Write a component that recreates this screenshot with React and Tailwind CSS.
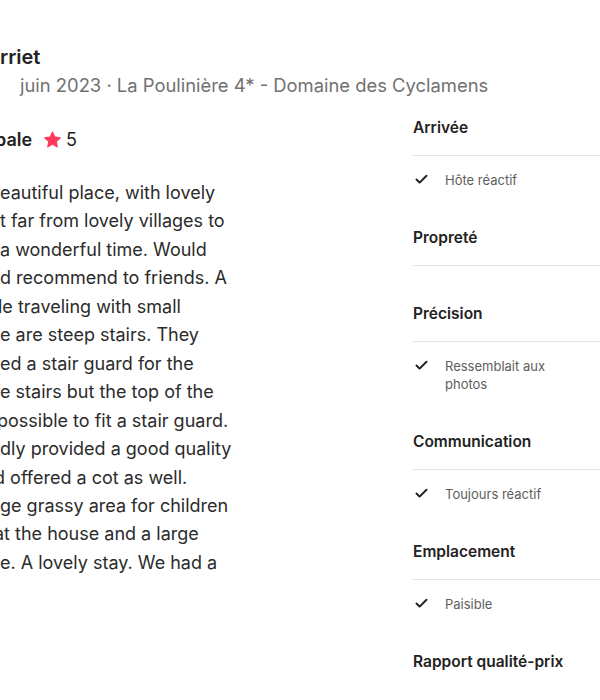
import { Check } from 'lucide-react';

const reviewLines = [
  { text: 'eautiful place, with lovely', shift: '' },
  { text: 't far from lovely villages to', shift: '' },
  { text: 'a wonderful time. Would', shift: '' },
  { text: 'd recommend to friends. A', shift: '' },
  { text: 'le traveling with small', shift: '-ml-[2px]' },
  { text: 'e are steep stairs. They', shift: '' },
  { text: 'ed a stair guard for the', shift: '' },
  { text: 'e stairs but the top of the', shift: '' },
  { text: 'possible to fit a stair guard.', shift: '-ml-[3px]' },
  { text: 'dly provided a good quality', shift: '' },
  { text: 'd offered a cot as well.', shift: '-ml-[6px]' },
  { text: 'ge grassy area for children', shift: '' },
  { text: 'at the house and a large', shift: '-ml-[6px]' },
  { text: 'e. A lovely stay. We had a', shift: '' },
];

const categories = [
  { title: 'Arrivée', items: ['Hôte réactif'] },
  { title: 'Propreté', items: [] },
  { title: 'Précision', items: ['Ressemblait aux photos'] },
  { title: 'Communication', items: ['Toujours réactif'] },
  { title: 'Emplacement', items: ['Paisible'] },
  { title: 'Rapport qualité-prix', items: [], last: true },
];

const Star = () => (
  <svg viewBox="0 0 32 32" className="w-[17px] h-[17px]" fill="#ff385c">
    <path d="M15.1 1.58l-4.13 8.88-9.86 1.27a1 1 0 0 0-.54 1.74l7.3 6.57-1.97 9.85a1 1 0 0 0 1.48 1.06l8.62-5 8.63 5a1 1 0 0 0 1.48-1.06l-1.97-9.85 7.3-6.57a1 1 0 0 0-.55-1.73l-9.86-1.28-4.12-8.88a1 1 0 0 0-1.82 0z" />
  </svg>
);

export default function App() {
  return (
    <div
      className="w-[600px] h-[700px] overflow-hidden bg-white text-[#222222]"
      style={{ fontFamily: 'Inter, "Noto Sans", sans-serif' }}
    >
      {/* reviewer header */}
      <div className="pt-[43px]">
        <div className="text-[20px] leading-[28px] font-semibold">rriet</div>
        <div className="pl-[20px] text-[18.4px] leading-[28px] text-[#717171] whitespace-nowrap">
          juin 2023 · La Poulinière 4* - Domaine des Cyclamens
        </div>
      </div>

      <div className="flex mt-[19px]">
        {/* review column */}
        <div className="w-[400px] shrink-0 overflow-hidden pt-[7px]">
          <div className="flex items-center h-[28px] text-[18px]">
            <span className="font-semibold -ml-[5px]">bale</span>
            <span className="ml-[12px]"><Star /></span>
            <span className="ml-[5px]">5</span>
          </div>
          <div className="mt-[26px] text-[18px] leading-[28.46px] text-[#2b2b2b]">
            {reviewLines.map((line, i) => (
              <div key={i} className={`whitespace-nowrap ${line.shift}`}>
                {line.text}
              </div>
            ))}
          </div>
        </div>

        {/* rating categories */}
        <div className="ml-[13px] flex-1">
          {categories.map((cat) => (
            <div key={cat.title} className={cat.items.length > 0 ? 'mb-[39px]' : 'mb-[38px]'}>
              <div
                className={`text-[15.5px] leading-[20px] font-semibold pb-[17px] ${
                  cat.last ? '' : 'border-b border-[#e4e4e4]'
                }`}
              >
                {cat.title}
              </div>
              {cat.items.length > 0 && (
                <ul className="pt-[15px]">
                  {cat.items.map((item) => (
                    <li key={item} className="flex items-start">
                      <Check className="w-[15px] h-[15px] mt-[1px] ml-[1px] shrink-0" strokeWidth={3.2} />
                      <span className="ml-[16px] w-[120px] text-[13px] leading-[18px] text-[#5e5e5e]">{item}</span>
                    </li>
                  ))}
                </ul>
              )}
            </div>
          ))}
        </div>
      </div>
    </div>
  );
}
